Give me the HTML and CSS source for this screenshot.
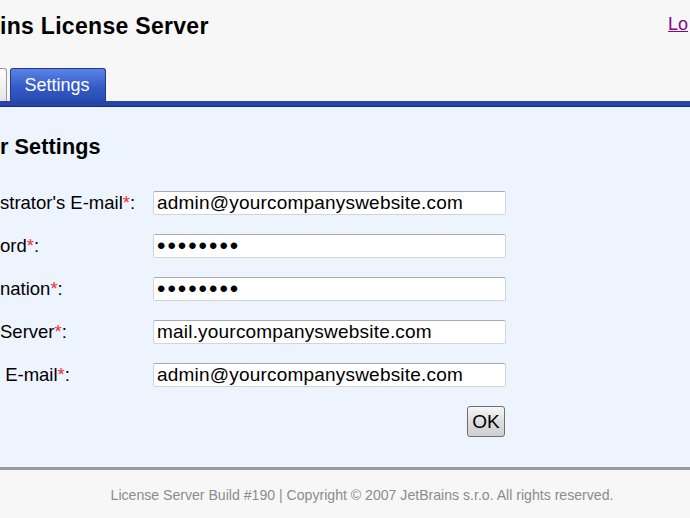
FILE: index.html
```html
<!DOCTYPE html>
<html>
<head>
<meta charset="utf-8">
<title>License Server</title>
<link rel="stylesheet" href="styles.css">
</head>
<body>
<div class="header">
  <h1 class="title">ins License Server</h1>
  <a class="logout" href="#">Lo</a>
</div>
<div class="tabs">
  <div class="tab tab-other"></div>
  <div class="tab tab-active">Settings</div>
</div>
<div class="tabbar"></div>
<div class="content">
  <h2 class="heading">r Settings</h2>
  <form class="form">
    <label class="label">strator's E-mail<span class="req">*</span>:</label>
    <input class="field" type="text" value="admin@yourcompanyswebsite.com">
    <label class="label">ord<span class="req">*</span>:</label>
    <input class="field" type="password" value="password">
    <label class="label">nation<span class="req">*</span>:</label>
    <input class="field" type="password" value="password">
    <label class="label">Server<span class="req">*</span>:</label>
    <input class="field" type="text" value="mail.yourcompanyswebsite.com">
    <label class="label">&nbsp;E-mail<span class="req">*</span>:</label>
    <input class="field" type="text" value="admin@yourcompanyswebsite.com">
    <div class="actions"><button class="ok" type="button">OK</button></div>
  </form>
</div>
<div class="footer">License Server Build #190 | Copyright © 2007 JetBrains s.r.o. All rights reserved.</div>
</body>
</html>
```
FILE: styles.css
```css
html, body {
  margin: 0;
  padding: 0;
}
body {
  background: #f7f7f7;
  font-family: "Liberation Sans", Arial, sans-serif;
  color: #000;
  overflow: hidden;
  width: 690px;
  height: 518px;
}
.header {
  display: flex;
  justify-content: space-between;
  align-items: flex-start;
  height: 68px;
}
.title {
  margin: 12px 0 0 0;
  font-size: 23px;
  font-weight: bold;
  line-height: 28px;
  letter-spacing: 0.3px;
}
.logout {
  margin-top: 12px;
  font-size: 18px;
  line-height: 24px;
  color: #8b008b;
  width: 22px;
  overflow: hidden;
  white-space: nowrap;
}
.tabs {
  display: flex;
  align-items: flex-end;
  gap: 3px;
  height: 33px;
}
.tab {
  box-sizing: border-box;
  height: 33px;
  border-radius: 3px 3px 0 0;
}
.tab-other {
  width: 7px;
  background: linear-gradient(#ffffff, #e4e4e4);
  border: 1px solid #9a9a9a;
  border-left: none;
  border-bottom: none;
  border-radius: 0 3px 0 0;
}
.tab-active {
  width: 96px;
  background: linear-gradient(#5a84e6, #3259c4 60%, #2a4cb0);
  border: 1px solid #1d3a8f;
  border-bottom: none;
  color: #fff;
  font-size: 18px;
  line-height: 33px;
  text-align: center;
  padding-right: 2px;
}
.tabbar {
  height: 5px;
  background: #2546a8;
  border-bottom: 1px solid #1a2f75;
}
.content {
  background: #edf4fe;
  height: 363px;
  padding-top: 27px;
  box-sizing: border-box;
  border-bottom: 3px solid #9a9a9a;
}
.heading {
  margin: 0;
  font-size: 21.6px;
  font-weight: bold;
  line-height: 26px;
  letter-spacing: 0.1px;
}
.form {
  margin-top: 31px;
  display: grid;
  grid-template-columns: 153px 353px;
  grid-auto-rows: minmax(24px, auto);
  row-gap: 19px;
  align-items: center;
}
.label {
  font-size: 18.5px;
  white-space: nowrap;
  padding-bottom: 1px;
}
.req {
  color: #f0302f;
}
.field {
  box-sizing: border-box;
  width: 353px;
  height: 24px;
  margin: 0;
  padding: 0 3px;
  border: 1px solid #d2d4d8;
  border-top-color: #a9abb0;
  border-radius: 2px;
  background: #fff;
  font-family: "Liberation Sans", Arial, sans-serif;
  font-size: 19px;
  letter-spacing: 0.2px;
  color: #000;
}
.field[type="password"] {
  font-size: 24px;
  letter-spacing: 2px;
}
.actions {
  grid-column: 1 / 3;
  display: flex;
  justify-content: flex-end;
}
.ok {
  box-sizing: border-box;
  width: 38px;
  height: 31px;
  margin-right: 1px;
  padding: 0;
  border: 1px solid #6f6f6f;
  border-radius: 3px;
  background: linear-gradient(#f6f6f6, #dedede 50%, #cfcfcf);
  font-family: "Liberation Sans", Arial, sans-serif;
  font-size: 19px;
  color: #000;
}
.footer {
  text-align: center;
  font-size: 14.1px;
  color: #8c8c8c;
  padding-top: 17px;
  padding-left: 34px;
}
```
